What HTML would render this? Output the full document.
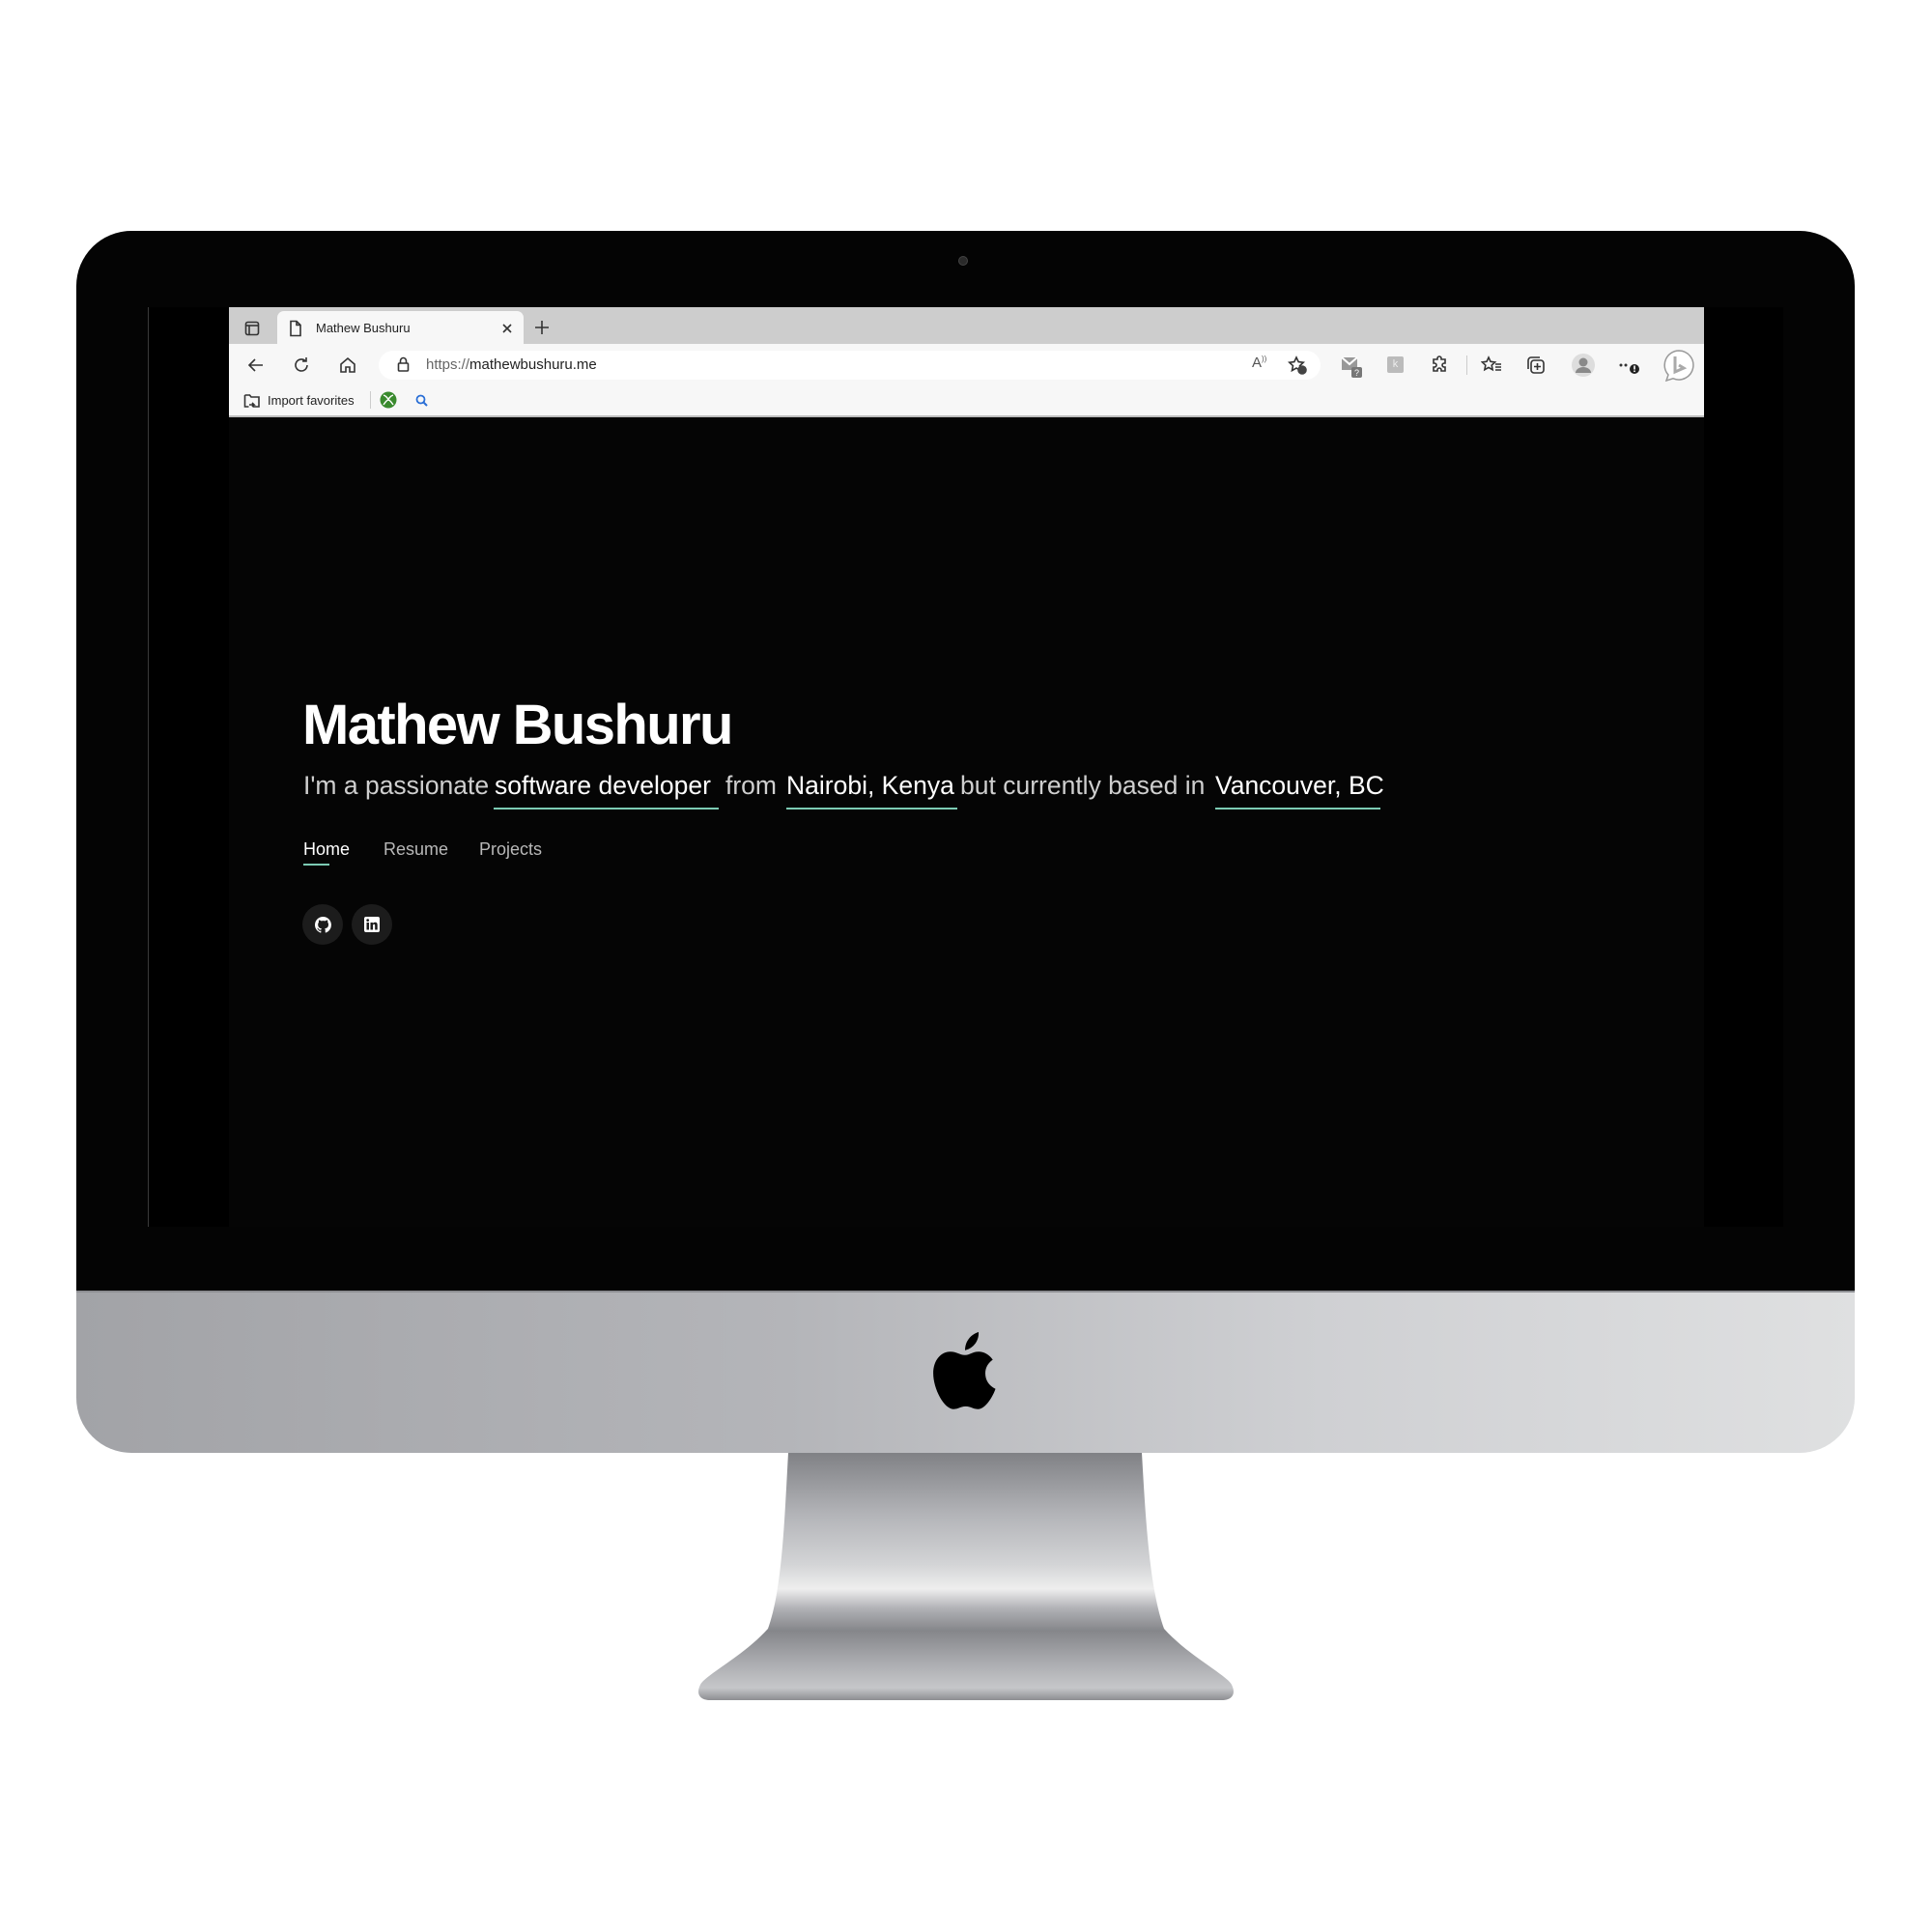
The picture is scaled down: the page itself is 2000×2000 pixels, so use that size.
<!DOCTYPE html>
<html><head><meta charset="utf-8"><style>
*{margin:0;padding:0;box-sizing:border-box}
body{width:2000px;height:2000px;background:#fff;position:relative;overflow:hidden;font-family:"Liberation Sans",sans-serif}
.a{position:absolute}
#bezel{left:79px;top:239px;width:1841px;height:1100px;background:#040404;border-radius:57px 57px 0 0}
#chin{left:79px;top:1336px;width:1841px;height:168px;border-radius:0 0 57px 57px;background:linear-gradient(90deg,#a2a3a7 0%,#b4b5b9 40%,#cfd0d3 70%,#dfe0e1 100%);border-top:2px solid #8d8e92}
#screen{left:153px;top:318px;width:1693px;height:952px;background:#000;border-left:1px solid #3a3a3a}
#page{left:237px;top:432px;width:1527px;height:838px;background:#050505}
#tabbar{left:237px;top:318px;width:1527px;height:38px;background:#cdcdcd}
#tab{left:287px;top:322px;width:255px;height:36px;background:#f7f7f7;border-radius:7px 7px 0 0}
#toolbar{left:237px;top:356px;width:1527px;height:76px;background:#f7f7f7;border-bottom:2px solid #bdbdbd}
#url{left:392px;top:363px;width:975px;height:30px;background:#fff;border-radius:15px}
.t{color:#222;font-size:13px}
.ic{position:absolute;stroke:#333;fill:none;stroke-width:1.6}
.w{color:#fff}
.sub{position:absolute;top:798px;font-size:26.5px;color:#cfcfcf;white-space:nowrap}
.sub.w{color:#fff}
.ul{position:absolute;top:836px;height:2px;background:#7ccbb4}
.nav{position:absolute;top:869px;font-size:18px;color:#b8b8b8}
.circ{position:absolute;width:42px;height:42px;border-radius:50%;background:#1c1c1c;top:936px}
</style></head><body>
<div class="a" id="bezel"></div>
<div class="a" style="left:992px;top:265px;width:10px;height:10px;border-radius:50%;background:#2a2a2a;border:1px solid #444"></div>
<div class="a" id="screen"></div>
<div class="a" id="page"></div>
<div class="a" id="tabbar"></div>
<div class="a" id="tab"></div>
<div class="a" id="toolbar"></div>
<div class="a" id="url"></div>

<svg class="ic" style="left:253px;top:332px" width="16" height="16"><rect x="1.5" y="1.5" width="13" height="13" rx="2"/><line x1="1.5" y1="5" x2="14.5" y2="5"/><line x1="5" y1="5" x2="5" y2="14.5"/></svg>
<svg class="ic" style="left:299px;top:331px" width="14" height="18"><path d="M2 1.5h6l4 4v11H2z M8 1.5v4h4"/></svg>
<div class="a t" style="left:327px;top:332px">Mathew Bushuru</div>
<svg class="ic" style="left:519px;top:334px" width="12" height="12"><path d="M2 2l8 8M10 2l-8 8"/></svg>
<svg class="ic" style="left:553px;top:331px" width="16" height="16"><path d="M8 1v14M1 8h14"/></svg>

<svg class="ic" style="left:256px;top:369px" width="18" height="18"><path d="M16 9H2M8 3L2 9l6 6"/></svg>
<svg class="ic" style="left:303px;top:369px" width="18" height="18"><path d="M15 9a6 6 0 1 1-2-4.5M14 1v4h-4"/></svg>
<svg class="ic" style="left:351px;top:369px" width="18" height="18"><path d="M2 8l7-6 7 6v8h-5v-5H7v5H2z"/></svg>
<svg class="ic" style="left:411px;top:369px" width="13" height="17" stroke="#666"><rect x="1.5" y="7" width="10" height="8" rx="1"/><path d="M3.5 7V4.5a3 3 0 0 1 6 0V7"/></svg>
<div class="a" style="left:441px;top:369px;font-size:15px;color:#666">https://<span style="color:#222">mathewbushuru.me</span></div>
<div class="a" style="left:1296px;top:367px;font-size:15px;color:#555">A<sup style="font-size:8px">))</sup></div>
<svg class="ic" style="left:1333px;top:368px" width="20" height="20"><path d="M9 2l2.2 4.6 5 .6-3.7 3.4 1 5L9 13l-4.5 2.6 1-5L1.8 7.2l5-.6z"/><circle cx="15" cy="15" r="4" fill="#444" stroke="#444"/></svg>
<svg class="a" style="left:1388px;top:368px" width="24" height="24"><path d="M1 2h16v13H1z" fill="#999"/><path d="M1 2l8 7 8-7" stroke="#fff" stroke-width="2" fill="none"/><rect x="11" y="12" width="11" height="11" rx="2" fill="#777"/><text x="14" y="21" font-size="9" fill="#fff" font-family="Liberation Sans">?</text></svg>
<div class="a" style="left:1436px;top:369px;width:17px;height:17px;background:#bbb;border-radius:2px;color:#eee;font-size:11px;text-align:center;line-height:17px">k</div>
<svg class="ic" style="left:1481px;top:368px" width="20" height="20"><path d="M7 3a2 2 0 0 1 4 0v1h4v4h-1a2 2 0 0 0 0 4h1v4h-4v-1a2 2 0 0 0-4 0v1H3v-4h1a2 2 0 0 0 0-4H3V4h4z"/></svg>
<div class="a" style="left:1518px;top:368px;width:1px;height:20px;background:#ccc"></div>
<svg class="ic" style="left:1533px;top:368px" width="22" height="20"><path d="M8 2l2 4.3 4.6.6-3.4 3.2.9 4.6L8 12.4l-4.1 2.3.9-4.6L1.4 6.9 6 6.3z M15 9h6M15 12h6M15 15h6"/></svg>
<svg class="ic" style="left:1579px;top:367px" width="22" height="22"><rect x="6" y="6" width="13" height="13" rx="3"/><path d="M3 15V6a3 3 0 0 1 3-3h9M12.5 9v7M9 12.5h7"/></svg>
<svg class="a" style="left:1627px;top:366px" width="24" height="24"><circle cx="12" cy="12" r="12" fill="#ddd"/><circle cx="12" cy="9" r="4.5" fill="#8a8a8a"/><path d="M4 20a8 6 0 0 1 16 0z" fill="#8a8a8a"/></svg>
<svg class="a" style="left:1676px;top:370px" width="24" height="18"><circle cx="2" cy="8" r="1.5" fill="#333"/><circle cx="7" cy="8" r="1.5" fill="#333"/><circle cx="16" cy="12" r="5" fill="#222"/><rect x="15.2" y="8.5" width="1.6" height="4" fill="#fff"/><rect x="15.2" y="13.5" width="1.6" height="1.5" fill="#fff"/></svg>
<svg class="a" style="left:1721px;top:361px" width="34" height="34"><path d="M17 2a15 15 0 1 1-6 28.8L4 33l2-6A15 15 0 0 1 17 2z" fill="#fff" stroke="#999" stroke-width="1.5"/><path d="M13 8v16l9-4-5-3" fill="none" stroke="#aaa" stroke-width="3"/></svg>

<svg class="ic" style="left:252px;top:406px" width="18" height="17"><path d="M1.5 3h5l1.5 2h8v10h-6M1.5 3v12h4M6 13h5l-2-2M11 13l-2 2"/></svg>
<div class="a" style="left:277px;top:407px;font-size:13px;color:#222">Import favorites</div>
<div class="a" style="left:383px;top:405px;width:1px;height:18px;background:#ccc"></div>
<svg class="a" style="left:393px;top:405px" width="18" height="18"><circle cx="9" cy="9" r="8.5" fill="#3a8a2e"/><path d="M4 4c3 1 5 4 5 5 0-1 2-4 5-5M4 14c2-3 4-5 5-5 1 0 3 2 5 5" stroke="#fff" stroke-width="1.4" fill="none"/></svg>
<svg class="a" style="left:430px;top:408px" width="13" height="13"><circle cx="5.5" cy="5.5" r="4" stroke="#2a6fd6" stroke-width="1.8" fill="none"/><path d="M8.5 8.5l3.5 3.5" stroke="#2a6fd6" stroke-width="2"/></svg>

<div class="a w" style="left:313px;top:717px;font-size:58px;font-weight:bold;letter-spacing:-1.6px;white-space:nowrap">Mathew Bushuru</div>
<div class="sub" style="left:314px">I'm a passionate</div>
<div class="sub w" style="left:512px">software developer</div>
<div class="sub" style="left:751px">from</div>
<div class="sub w" style="left:814px">Nairobi, Kenya</div>
<div class="sub" style="left:994px">but currently based in</div>
<div class="sub w" style="left:1258px">Vancouver, BC</div>
<div class="ul" style="left:511px;width:233px"></div>
<div class="ul" style="left:814px;width:177px"></div>
<div class="ul" style="left:1258px;width:171px"></div>
<div class="nav" style="left:314px;color:#fff">Home</div>
<div class="nav" style="left:397px">Resume</div>
<div class="nav" style="left:496px">Projects</div>
<div class="a" style="left:314px;top:894px;width:27px;height:2px;background:#7ccbb4"></div>
<div class="circ" style="left:313px"></div>
<div class="circ" style="left:364px"></div>
<svg class="a" style="left:326px;top:949px" width="17" height="17" viewBox="0 0 16 16"><path fill="#fff" d="M8 0a8 8 0 0 0-2.5 15.6c.4 0 .5-.2.5-.4v-1.4c-2.2.5-2.7-1-2.7-1-.4-.9-.9-1.2-.9-1.2-.7-.5.1-.5.1-.5.8.1 1.2.8 1.2.8.7 1.300 1.9.9 2.4.7 0-.5.3-.9.5-1.1-1.8-.2-3.6-.9-3.6-4 0-.9.3-1.6.8-2.1 0-.2-.4-1 .1-2.1 0 0 .7-.2 2.2.8a7.6 7.6 0 0 1 4 0c1.5-1 2.2-.8 2.2-.8.4 1.1.2 1.9.1 2.1.5.6.8 1.3.8 2.1 0 3.1-1.9 3.7-3.6 3.9.3.3.5.8.5 1.5v2.2c0 .2.1.5.6.4A8 8 0 0 0 8 0z"/></svg>
<svg class="a" style="left:377px;top:949px" width="16" height="16" viewBox="0 0 16 16"><rect width="16" height="16" rx="2" fill="#fff"/><rect x="2.5" y="6" width="2.5" height="7.5" fill="#1c1c1c"/><circle cx="3.7" cy="3.6" r="1.4" fill="#1c1c1c"/><path d="M6.5 6h2.4v1.1c.4-.7 1.2-1.3 2.4-1.3 2 0 2.4 1.3 2.4 3v4.7h-2.5V9.4c0-.9-.1-1.6-1-1.6s-1.2.7-1.2 1.5v4.2H6.5z" fill="#1c1c1c"/></svg>

<div class="a" id="chin"></div>
<svg class="a" style="left:964px;top:1375px" width="70" height="89" viewBox="0 0 100 120"><path fill="#000" d="M50 36C42 36 38 31 28 31 15 31 3 43 3 63c0 23 16 53 30 53 8 0 10-4 18-4s10 4 18 4c11 0 22-18 26-30-10-5-15-13-15-23 0-9 5-16 11-20-6-9-15-12-21-12-9 0-13 5-20 5z"/><path fill="#000" d="M50 29c0-13 8-23 20-27 1 12-7 24-20 27z"/></svg>

<svg class="a" style="left:700px;top:1504px" width="600" height="270">
<defs><linearGradient id="sg" x1="0" y1="0" x2="0" y2="1">
<stop offset="0" stop-color="#808185"/><stop offset="0.25" stop-color="#b3b4b8"/><stop offset="0.45" stop-color="#d3d4d6"/><stop offset="0.55" stop-color="#eeeeee"/><stop offset="0.63" stop-color="#b0b1b5"/><stop offset="0.72" stop-color="#85868a"/><stop offset="0.82" stop-color="#a3a4a8"/><stop offset="0.95" stop-color="#c6c7ca"/><stop offset="1" stop-color="#8d8e92"/></linearGradient></defs>
<path fill="url(#sg)" d="M116 0H482C486 70 490 140 505 182 C530 210 570 230 575 240 C580 250 575 256 565 256H35C25 256 20 250 25 240 C30 230 70 210 95 182 C110 140 112 70 116 0Z"/>
</svg>
</body></html>
